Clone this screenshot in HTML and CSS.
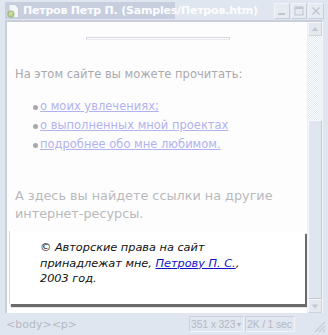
FILE: index.html
```html
<!DOCTYPE html>
<html lang="ru">
<head>
<meta charset="utf-8">
<link rel="stylesheet" href="styles.css">
</head>
<body>
<div class="window">
  <div class="titlebar">
    <div class="title-hl">
      <svg class="app-icon" width="12" height="14" viewBox="0 0 12 14">
        <path d="M2 0.5h6l3.5 3.5v9.5h-9.5z" fill="#f4f6f8" stroke="#c4cad4"/>
        <circle cx="4" cy="10" r="3.2" fill="#b8d08a" stroke="#98b070" stroke-width="0.8"/>
        <path d="M2.6 10.6c0.8-1.8 2.2-2.2 2.8-1.6" stroke="#f0f4e8" stroke-width="0.9" fill="none"/>
      </svg>
      <span class="title">Петров Петр П. (Samples/Петров.htm)</span>
    </div>
    <div class="controls">
      <span class="btn"><svg width="14" height="14" viewBox="0 0 14 14"><rect x="3" y="9" width="7" height="2" fill="#c0c6d0"/></svg></span>
      <span class="btn"><svg width="14" height="14" viewBox="0 0 14 14"><rect x="3" y="3" width="8" height="8" fill="none" stroke="#c0c6d0" stroke-width="1"/><rect x="3" y="3" width="8" height="2" fill="#c0c6d0"/></svg></span>
      <span class="btn"><svg width="14" height="14" viewBox="0 0 14 14"><path d="M3.5 3.5l7 7M10.5 3.5l-7 7" stroke="#c0c6d0" stroke-width="1.4"/></svg></span>
    </div>
  </div>
  <div class="frame">
    <div class="doc">
      <div class="hr"></div>
      <p class="intro">На этом сайте вы можете прочитать:</p>
      <ul class="links">
        <li><a href="#">о моих увлечениях;</a></li>
        <li><a href="#">о выполненных мной проектах</a></li>
        <li><a href="#">подробнее обо мне любимом.</a></li>
      </ul>
      <p class="more">А здесь вы найдете ссылки на другие интернет-ресурсы.</p>
      <div class="copy">
        <p>© Авторские права на сайт<br>принадлежат мне, <a href="#">Петрову П. С.</a>,<br>2003 год.</p>
      </div>
    </div>
    <div class="scrollbar">
      <div class="sb-btn"><svg width="14" height="14" viewBox="0 0 14 14"><path d="M3.5 9h7l-3.5-4z" fill="#c4c8d0"/></svg></div>
      <div class="sb-track"></div>
      <div class="sb-thumb"></div>
      <div class="sb-btn"><svg width="14" height="14" viewBox="0 0 14 14"><path d="M3.5 5.5h7l-3.5 4z" fill="#c4c8d0"/></svg></div>
    </div>
  </div>
  <div class="status">
    <span class="tags">&lt;body&gt;&lt;p&gt;</span>
    <span class="field size">351 x 323<span class="caret">▾</span></span>
    <span class="field speed">2K / 1 sec</span>
    <svg class="grip" width="14" height="14" viewBox="0 0 14 14">
      <path d="M13 3L3 13M13 7L7 13M13 11L11 13" stroke="#c8ccd4" stroke-width="1.2"/>
    </svg>
  </div>
</div>
</body>
</html>
```

FILE: styles.css
```css
html, body {
  margin: 0;
  padding: 0;
}
body {
  width: 328px;
  height: 335px;
  overflow: hidden;
  background: #e0e6ef;
  font-family: "DejaVu Sans", Verdana, sans-serif;
}
.window {
  width: 328px;
  height: 335px;
  display: flex;
  flex-direction: column;
  background: #e0e6ef;
}
.titlebar {
  height: 20px;
  flex: none;
  display: flex;
  align-items: center;
  justify-content: space-between;
  padding: 0 4px 0 5px;
}
.title-hl {
  display: flex;
  align-items: center;
  gap: 4px;
  height: 17px;
  padding: 0 6px 0 2px;
  margin-top: 1px;
  background: #c7cfde;
  width: 162px;
}
.app-icon {
  flex: none;
}
.title {
  color: #fbfcfe;
  font-family: "DejaVu Sans", Tahoma, sans-serif;
  font-weight: bold;
  font-size: 11px;
  white-space: nowrap;
  letter-spacing: -0.2px;
}
.controls {
  display: flex;
  gap: 1px;
  margin-top: 2px;
}
.btn {
  width: 14px;
  height: 14px;
  border: 1px solid #f0f3f8;
  border-right-color: #c8ced8;
  border-bottom-color: #c8ced8;
  background: #e6ebf2;
  display: flex;
}
.frame {
  height: 293px;
  flex: none;
  margin: 0 5px 0 5px;
  border-top: 2px solid #c9ced8;
  border-left: 2px solid #c9ced8;
  border-right: 1px solid #f4f6fa;
  box-sizing: border-box;
  display: flex;
}
.doc {
  flex: 1;
  background: #fdfdfe;
  overflow: hidden;
  padding: 15px 0 0 0;
}
.hr {
  width: 142px;
  height: 1px;
  margin-left: 79px;
  border: 1px solid #d6d8e0;
  border-bottom-color: #e8e9ee;
}
.intro {
  margin: 27px 0 0 8px;
  font-size: 11.5px;
  line-height: 14px;
  color: #a9a9ad;
}
.links {
  margin: 16px 0 0 0;
  padding: 0 0 0 33px;
  list-style: none;
}
.links li {
  font-size: 11.5px;
  line-height: 19px;
  position: relative;
}
.links li::before {
  content: "";
  position: absolute;
  left: -7px;
  top: 8px;
  width: 5px;
  height: 5px;
  border-radius: 50%;
  background: #a8a8ac;
}
.links a {
  color: #b2b2ee;
  text-decoration: underline;
}
.more {
  margin: 33px 0 0 8px;
  font-size: 12.8px;
  line-height: 18px;
  color: #b9b9bc;
  width: 280px;
}
.copy {
  margin: 8px 0 0 2px;
  width: 296px;
  height: 73px;
  background: #ffffff;
  border-left: 1px solid #d4d6dc;
  box-shadow: 2px 3px 1px #6a6a6a;
  padding: 1px 0 0 30px;
  box-sizing: border-box;
}
.copy p {
  margin: 8px 0 0 0;
  font-size: 11.3px;
  line-height: 15.5px;
  font-style: italic;
  color: #111;
}
.copy a {
  color: #1010c8;
  text-decoration: underline;
}
.scrollbar {
  width: 14px;
  display: flex;
  flex-direction: column;
  border-left: 1px solid #eceff4;
}
.sb-btn {
  height: 14px;
  flex: none;
  background: #e4e9f0;
  border: 1px solid #f4f6fa;
  border-right-color: #cfd4dc;
  border-bottom-color: #cfd4dc;
  box-sizing: border-box;
  display: flex;
  align-items: center;
  justify-content: center;
}
.sb-btn svg {
  flex: none;
}
.sb-track {
  height: 84px;
  flex: none;
  background-color: #f4f6f9;
  background-image: repeating-conic-gradient(#e4e9f0 0 25%, #fbfcfd 0 50%);
  background-size: 2px 2px;
}
.sb-thumb {
  flex: 1;
  background: #e0e6ef;
  border: 1px solid #f6f8fb;
  border-right-color: #c4c8d0;
  border-bottom-color: #c4c8d0;
}
.status {
  flex: 1;
  display: flex;
  align-items: center;
  padding: 0 2px 0 6px;
  color: #b4b9c4;
  position: relative;
  white-space: nowrap;
}
.tags {
  font-family: "DejaVu Sans", sans-serif;
  font-size: 11px;
  flex: 1;
}
.field {
  height: 16px;
  border: 1px solid #f2f4f8;
  border-left-color: #cdd2da;
  border-top-color: #cdd2da;
  display: flex;
  align-items: center;
  padding: 0 1px;
  font-family: "Liberation Sans", Arial, sans-serif;
  font-size: 10.5px;
  letter-spacing: -0.2px;
  box-sizing: border-box;
  margin-right: 1px;
}
.size {
  width: 55px;
}
.speed {
  width: 50px;
  margin-right: 31px;
}
.caret {
  font-size: 8px;
  margin-left: 2px;
}
.grip {
  position: absolute;
  right: 2px;
  bottom: 2px;
}
```
